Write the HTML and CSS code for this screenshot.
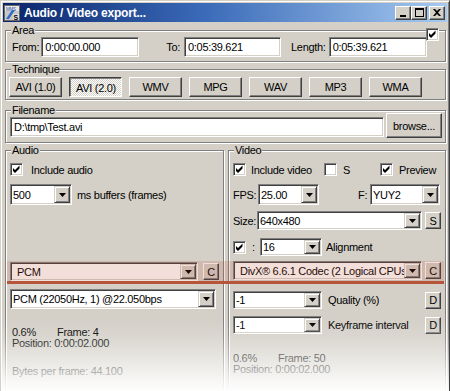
FILE: index.html
```html
<!DOCTYPE html>
<html lang="en">
<head>
    <meta charset="UTF-8">
    <title>Audio / Video export...</title>
    <link rel="stylesheet" href="styles.css">
</head>
<body>
    <div class="window">
        <div class="titlebar">
            <svg class="app-icon" width="16" height="16" viewBox="0 0 16 16">
                <rect x="0.5" y="0.5" width="15" height="15" fill="#c8c8c8" stroke="#6a6a6a"/>
                <rect x="1" y="1" width="14" height="5" fill="#e8e8e8"/>
                <text x="2" y="5.5" font-size="4.5" font-family="Liberation Sans" fill="#3050a0">MMS</text>
                <path d="M2 14 L8 5 L11 5 L5 14 Z" fill="#2f6fc8"/>
                <rect x="9" y="9" width="6" height="6" fill="#e0e0e0"/>
                <text x="9.6" y="14.6" font-size="7" font-weight="bold" font-family="Liberation Sans" fill="#000">S</text>
            </svg>
            <span class="title">Audio / Video export...</span>
            <div class="caption">
                <button class="cap-btn"><svg width="8" height="8" viewBox="0 0 8 8"><rect x="1" y="6" width="6" height="2"/></svg></button>
                <button class="cap-btn"><svg width="9" height="9" viewBox="0 0 9 9"><path d="M0 0h9v9H0z M1 2v6h7V2z" fill-rule="evenodd"/></svg></button>
                <button class="cap-btn close"><svg width="8" height="7" viewBox="0 0 8 7"><path d="M0 0h2l2 2 2-2h2L5 3.5 8 7H6L4 5 2 7H0l3-3.5z"/></svg></button>
            </div>
        </div>

        <div class="client">
            <span class="check area-check"><svg width="13" height="13" viewBox="0 0 13 13"><path d="M3 5 L5 7 L9.5 2.5 L9.5 5.5 L5 10 L3 8 Z"/></svg></span>

            <fieldset class="group">
                <legend>Area</legend>
                <div class="area-row">
                    <label>From:</label>
                    <div class="edit w98 ml2">0:00:00.000</div>
                    <label class="ml-to">To:</label>
                    <div class="edit w97 ml4">0:05:39.621</div>
                    <label class="ml-len">Length:</label>
                    <div class="edit w98 ml3">0:05:39.621</div>
                </div>
            </fieldset>

            <fieldset class="group technique">
                <legend>Technique</legend>
                <div class="tech-row">
                    <button class="btn tech">AVI (1.0)</button>
                    <button class="btn tech down">AVI (2.0)</button>
                    <button class="btn tech">WMV</button>
                    <button class="btn tech">MPG</button>
                    <button class="btn tech">WAV</button>
                    <button class="btn tech">MP3</button>
                    <button class="btn tech">WMA</button>
                </div>
            </fieldset>

            <fieldset class="group filename">
                <legend>Filename</legend>
                <div class="file-row">
                    <div class="edit file-edit">D:\tmp\Test.avi</div>
                    <button class="btn browse">browse...</button>
                </div>
            </fieldset>

            <div class="lower">
                <fieldset class="group col">
                    <legend>Audio</legend>
                    <div class="col-body">
                        <div class="row r-check">
                            <span class="check"><svg width="13" height="13" viewBox="0 0 13 13"><path d="M3 5 L5 7 L9.5 2.5 L9.5 5.5 L5 10 L3 8 Z"/></svg></span>
                            <span class="ml8">Include audio</span>
                        </div>
                        <div class="row r-combo">
                            <div class="combo w62"><span class="val">500</span><span class="drop"><svg width="7" height="4"><path d="M0 0h7L3.5 4z"/></svg></span></div>
                            <span class="ml5">ms buffers (frames)</span>
                        </div>
                        <div class="row r-codec">
                            <div class="combo codec w188"><span class="val">PCM</span><span class="drop"><svg width="7" height="4"><path d="M0 0h7L3.5 4z"/></svg></span></div>
                            <button class="btn small ml5">C</button>
                        </div>
                        <div class="row r-format">
                            <div class="combo w206 h20"><span class="val">PCM (22050Hz, 1) @22.050bps</span><span class="drop"><svg width="7" height="4"><path d="M0 0h7L3.5 4z"/></svg></span></div>
                        </div>
                        <div class="stats a-stats">
                            <div><span class="pct">0.6%</span>Frame: 4</div>
                            <div>Position: 0:00:02.000</div>
                            <div class="bytes">Bytes per frame: 44.100</div>
                        </div>
                    </div>
                </fieldset>

                <fieldset class="group col">
                    <legend>Video</legend>
                    <div class="col-body">
                        <div class="row r-check v-checks">
                            <div class="cell"><span class="check"><svg width="13" height="13" viewBox="0 0 13 13"><path d="M3 5 L5 7 L9.5 2.5 L9.5 5.5 L5 10 L3 8 Z"/></svg></span><span>Include video</span></div>
                            <div class="cell"><span class="check"></span><span>S</span></div>
                            <div class="cell"><span class="check"><svg width="13" height="13" viewBox="0 0 13 13"><path d="M3 5 L5 7 L9.5 2.5 L9.5 5.5 L5 10 L3 8 Z"/></svg></span><span>Preview</span></div>
                        </div>
                        <div class="row r-combo">
                            <label class="lbl-fps">FPS:</label>
                            <div class="combo w61"><span class="val">25.00</span><span class="drop"><svg width="7" height="4"><path d="M0 0h7L3.5 4z"/></svg></span></div>
                            <label class="lbl-f">F:</label>
                            <div class="combo w70"><span class="val">YUY2</span><span class="drop"><svg width="7" height="4"><path d="M0 0h7L3.5 4z"/></svg></span></div>
                        </div>
                        <div class="row r-size">
                            <label class="lbl-size">Size:</label>
                            <div class="combo w165 h19"><span class="val">640x480</span><span class="drop"><svg width="7" height="4"><path d="M0 0h7L3.5 4z"/></svg></span></div>
                            <button class="btn small ml3">S</button>
                        </div>
                        <div class="row r-align">
                            <span class="check"><svg width="13" height="13" viewBox="0 0 13 13"><path d="M3 5 L5 7 L9.5 2.5 L9.5 5.5 L5 10 L3 8 Z"/></svg></span>
                            <span class="colon">:</span>
                            <div class="combo w62 h18"><span class="val">16</span><span class="drop"><svg width="7" height="4"><path d="M0 0h7L3.5 4z"/></svg></span></div>
                            <span class="ml4">Alignment</span>
                        </div>
                        <div class="row r-codec">
                            <div class="combo codec w189"><span class="val">DivX® 6.6.1 Codec (2 Logical CPUs)</span><span class="drop"><svg width="7" height="4"><path d="M0 0h7L3.5 4z"/></svg></span></div>
                            <button class="btn small ml3">C</button>
                        </div>
                        <div class="row r-quality">
                            <div class="combo w89 h18"><span class="val">-1</span><span class="drop"><svg width="7" height="4"><path d="M0 0h7L3.5 4z"/></svg></span></div>
                            <span class="ml6">Quality (%)</span>
                            <button class="btn small push">D</button>
                        </div>
                        <div class="row r-key">
                            <div class="combo w89 h18"><span class="val">-1</span><span class="drop"><svg width="7" height="4"><path d="M0 0h7L3.5 4z"/></svg></span></div>
                            <span class="ml6">Keyframe interval</span>
                            <button class="btn small push">D</button>
                        </div>
                        <div class="stats v-stats">
                            <div><span class="pct">0.6%</span>Frame: 50</div>
                            <div>Position: 0:00:02.000</div>
                        </div>
                    </div>
                </fieldset>

                <div class="codec-mark"></div>
            </div>
        </div>

        <div class="fade"></div>
    </div>
</body>
</html>
```

FILE: styles.css
```css
* {
    box-sizing: border-box;
}
html, body {
    height: 391px;
    overflow: hidden;
}
body {
    margin: 0;
    background: #fff;
    font-family: "Liberation Sans", Arial, sans-serif;
    font-size: 11px;
    letter-spacing: -0.3px;
    color: #000;
}
button {
    font-family: inherit;
    font-size: inherit;
    letter-spacing: inherit;
    color: #000;
    padding: 0;
}
.window {
    position: relative;
    width: 450px;
    height: 391px;
    overflow: hidden;
    background: #d4d0c8;
    border: 1px solid;
    border-color: #d4d0c8 #404040 #404040 #d4d0c8;
    border-bottom: none;
    box-shadow: inset 1px 1px #fff, inset -1px 0 #808080;
    padding: 2px 2px 0 2px;
}

/* title bar */
.titlebar {
    display: flex;
    align-items: center;
    height: 19px;
    background: linear-gradient(to right, #0a246a, #3a6ab8 45%, #a6caf0);
}
.app-icon {
    margin-left: 1px;
}
.title {
    margin-left: 4px;
    color: #fff;
    font-weight: bold;
    font-size: 12px;
    letter-spacing: -0.2px;
}
.caption {
    margin-left: auto;
    margin-right: 2px;
    display: flex;
}
.cap-btn {
    width: 16px;
    height: 14px;
    background: #d4d0c8;
    border: 1px solid;
    border-color: #fff #404040 #404040 #fff;
    box-shadow: inset -1px -1px #808080;
    display: flex;
    align-items: center;
    justify-content: center;
}
.cap-btn.close {
    margin-left: 2px;
}

/* client area */
.client {
    position: relative;
    padding: 0 1px 0 2px;
}
.area-check {
    position: absolute;
    top: 4px;
    left: 423px;
}
.group {
    margin: 2px 0 0 0;
    padding: 0;
    min-width: 0;
    border: 1px solid #808080;
    box-shadow: inset 1px 1px #fff, 1px 1px #fff;
}
legend {
    margin-left: 5px;
    padding: 0 1px;
    line-height: 12px;
    background: #d4d0c8;
}
.technique {
    margin-top: 1px;
}
.filename {
    margin-top: 4px;
}

/* sunken edit */
.edit {
    height: 20px;
    display: flex;
    align-items: center;
    padding-left: 3px;
    background: #fff;
    border: 1px solid;
    border-color: #808080 #fff #fff #808080;
    box-shadow: inset 1px 1px #404040, inset -1px -1px #d4d0c8;
    white-space: nowrap;
}
.btn {
    background: #d4d0c8;
    border: 1px solid;
    border-color: #fff #404040 #404040 #fff;
    box-shadow: inset -1px -1px #808080;
}
.check {
    width: 13px;
    height: 13px;
    flex: none;
    background: #fff;
    border: 1px solid;
    border-color: #808080 #fff #fff #808080;
    box-shadow: inset 1px 1px #404040, inset -1px -1px #d4d0c8;
    display: block;
}
.check svg {
    display: block;
    margin: -1px;
}

/* area */
.area-row {
    display: flex;
    align-items: center;
    padding: 1px 0 4px 6px;
}
.w98 { width: 98px; }
.w97 { width: 97px; }
.ml2 { margin-left: 2px; }
.ml3 { margin-left: 3px; }
.ml4 { margin-left: 4px; }
.ml5 { margin-left: 5px; }
.ml6 { margin-left: 6px; }
.ml8 { margin-left: 8px; }
.ml-to { margin-left: 27px; }
.ml-len { margin-left: 10px; }

/* technique */
.tech-row {
    display: flex;
    gap: 7px;
    padding: 2px 0 2px 3px;
}
.tech {
    width: 53px;
    height: 20px;
}
.tech.down {
    border-color: #404040 #fff #fff #404040;
    box-shadow: inset 1px 1px #808080;
    background: repeating-conic-gradient(#fff 0 25%, #d4d0c8 0 50%) 0 0 / 2px 2px;
    padding: 1px 0 0 1px;
}

/* filename */
.file-row {
    display: flex;
    align-items: flex-end;
    margin-top: -3px;
    padding: 0 3px 4px 4px;
}
.file-edit {
    flex: 1;
    margin: 0 2px 1px 0;
}
.browse {
    width: 56px;
    height: 25px;
}

/* audio / video */
.lower {
    position: relative;
    display: grid;
    grid-template-columns: 219px 218px;
    column-gap: 4px;
    margin-top: 1px;
}
.lower .group {
    margin-top: 0;
    height: 270px;
}
.col-body {
    display: flex;
    flex-direction: column;
    padding: 0 4px;
}
.row {
    display: flex;
    align-items: center;
    white-space: nowrap;
}
.r-check { height: 13px; margin-top: 7px; }
.r-combo { height: 21px; margin-top: 8px; }
.r-codec { height: 19px; margin-top: 57px; }
.r-format { height: 20px; margin-top: 8px; }
.r-size { height: 19px; margin-top: 6px; }
.r-align { height: 18px; margin-top: 8px; }
.r-size + .r-align + .r-codec { margin-top: 5px; }
.r-quality { height: 18px; margin-top: 11px; }
.r-key { height: 18px; margin-top: 7px; }

.v-checks {
    display: grid;
    grid-template-columns: 91px 56px auto;
}
.cell {
    display: flex;
    align-items: center;
    gap: 5px;
}
.cell + .cell {
    gap: 6px;
}

/* combo box */
.combo {
    display: flex;
    height: 21px;
    padding: 1px;
    background: #fff;
    border: 1px solid;
    border-color: #808080 #fff #fff #808080;
    box-shadow: inset 1px 1px #404040, inset -1px -1px #d4d0c8;
    flex: none;
}
.combo .val {
    flex: 1;
    min-width: 0;
    overflow: hidden;
    display: flex;
    align-items: center;
    padding-left: 1px;
}
.combo .drop {
    width: 16px;
    flex: none;
    display: flex;
    align-items: center;
    justify-content: center;
    background: #d4d0c8;
    border: 1px solid;
    border-color: #d4d0c8 #404040 #404040 #d4d0c8;
    box-shadow: inset 1px 1px #fff, inset -1px -1px #808080;
}
.combo.codec {
    height: 19px;
}
.combo.codec .val {
    padding-left: 5px;
}
.h20 { height: 20px; }
.h19 { height: 19px; }
.h18 { height: 18px; }
.w61 { width: 61px; }
.w62 { width: 62px; }
.w70 { width: 70px; }
.w89 { width: 89px; }
.w165 { width: 165px; }
.w188 { width: 188px; }
.w189 { width: 189px; }
.w206 { width: 206px; }

.small {
    width: 16px;
    height: 17px;
    flex: none;
}
.push {
    margin-left: auto;
}
.lbl-fps { width: 25px; }
.lbl-f { margin-left: 39px; width: 12px; }
.lbl-size { width: 24px; }
.colon { margin-left: 6px; width: 8px; }

.stats {
    line-height: 11px;
    padding-left: 2px;
}
.pct {
    display: inline-block;
    width: 45px;
}
.a-stats { margin-top: 18px; }
.a-stats .bytes { margin-top: 17px; }
.v-stats { margin-top: 19px; padding-left: 0; }

/* highlighted codec row */
.codec-mark {
    position: absolute;
    left: 2px;
    top: 117px;
    width: 437px;
    height: 23px;
    background: rgba(190, 80, 50, 0.18);
    border-bottom: 3px solid #b5553a;
}

.fade {
    position: absolute;
    left: 0;
    right: 0;
    top: 318px;
    height: 73px;
    background: linear-gradient(to bottom, rgba(255, 255, 255, 0), rgba(255, 255, 255, 0.15) 25%, rgba(255, 255, 255, 0.6) 65%, #fff);
}
```
